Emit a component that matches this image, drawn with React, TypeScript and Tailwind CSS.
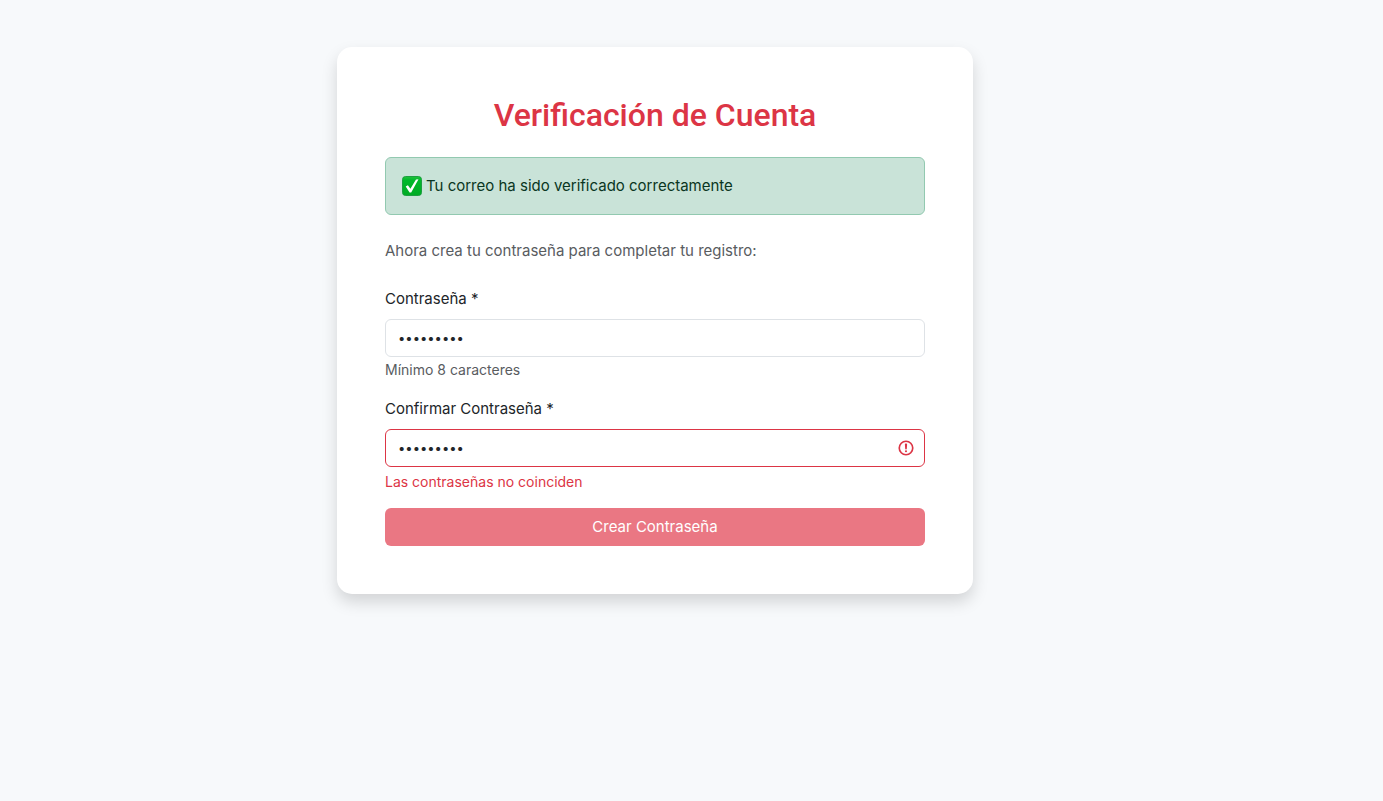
import { useState } from "react";

function CheckBadge() {
  return (
    <svg className="h-5 w-5 shrink-0" viewBox="0 0 20 20" role="img" aria-label="Correcto">
      <defs>
        <linearGradient id="badge" x1="0" y1="0" x2="0" y2="1">
          <stop offset="0" stopColor="#23c23e" />
          <stop offset="0.2" stopColor="#00b82b" />
          <stop offset="1" stopColor="#00ab24" />
        </linearGradient>
      </defs>
      <rect x="0.5" y="0.5" width="19" height="19" rx="3" fill="url(#badge)" stroke="#159a3a" strokeWidth="0.9" />
      <path d="M3.7 10.5 L5.9 9.3 L8.4 12.8 L14 3.6 L16.5 3.2 L9.2 16.4 L7.6 16.4 Z" fill="#fff" />
    </svg>
  );
}

function AlertIcon() {
  return (
    <svg
      className="pointer-events-none absolute inset-y-0 right-[10px] my-auto h-[18px] w-[18px]"
      viewBox="0 0 12 12"
      fill="none"
      stroke="#dc3545"
      aria-hidden="true"
    >
      <circle cx="6" cy="6" r="4.5" strokeWidth="1.1" />
      <path strokeLinejoin="round" strokeWidth="1.1" d="M5.8 3.6h.4L6 6.5z" />
      <circle cx="6" cy="8.2" r=".7" fill="#dc3545" stroke="none" />
    </svg>
  );
}

export default function App() {
  const [password, setPassword] = useState("secreto12");
  const [confirm, setConfirm] = useState("secreto21");
  const mismatch = password !== confirm;

  return (
    <main className="flex min-h-screen items-start justify-center bg-[#f7f9fb] pt-[47px] pr-[73px] font-['Inter','Liberation_Sans',sans-serif] text-[15px] leading-6 text-[#212529]">
      <section className="w-full max-w-[636px] rounded-[15px] bg-white p-12 shadow-[0_8px_16px_rgba(0,0,0,0.15)]">
        <h1 className="mb-[22px] text-center font-['Roboto','Liberation_Sans',sans-serif] text-[32px] leading-10 font-medium text-[#dc3545]">
          Verificación de Cuenta
        </h1>

        <div
          role="alert"
          className="mb-6 flex items-center gap-1 rounded-md border border-[#92c9b0] bg-[#c9e3d8] p-4 text-[#0a3622]"
        >
          <CheckBadge />
          <span>Tu correo ha sido verificado correctamente</span>
        </div>

        <p className="mb-6 text-[#595c5f]">Ahora crea tu contraseña para completar tu registro:</p>

        <form onSubmit={(e) => e.preventDefault()}>
          <div className="mb-4">
            <label htmlFor="password" className="mb-2 block">
              Contraseña *
            </label>
            <input
              id="password"
              type="password"
              value={password}
              onChange={(e) => setPassword(e.target.value)}
              aria-describedby="password-help"
              className="block h-[38px] w-full rounded-md border border-[#dee2e6] bg-white px-3 text-[13px]"
            />
            <p id="password-help" className="pt-0.5 pb-px text-sm leading-[21px] text-[#595c5f]">
              Mínimo 8 caracteres
            </p>
          </div>

          <div className="mb-4">
            <label htmlFor="confirm" className="mb-2 block">
              Confirmar Contraseña *
            </label>
            <div className="relative">
              <input
                id="confirm"
                type="password"
                value={confirm}
                onChange={(e) => setConfirm(e.target.value)}
                aria-invalid={mismatch}
                aria-describedby="confirm-error"
                className="block h-[38px] w-full rounded-md border border-[#dc3545] bg-white pr-9 pl-3 text-[13px]"
              />
              <AlertIcon />
            </div>
            <p id="confirm-error" className="mt-1 text-sm leading-[21px] text-[#dc3545]">
              Las contraseñas no coinciden
            </p>
          </div>

          <button
            type="submit"
            disabled={mismatch}
            className="block h-[38px] w-full rounded-md bg-[#ea7783] text-white"
          >
            Crear Contraseña
          </button>
        </form>
      </section>
    </main>
  );
}
